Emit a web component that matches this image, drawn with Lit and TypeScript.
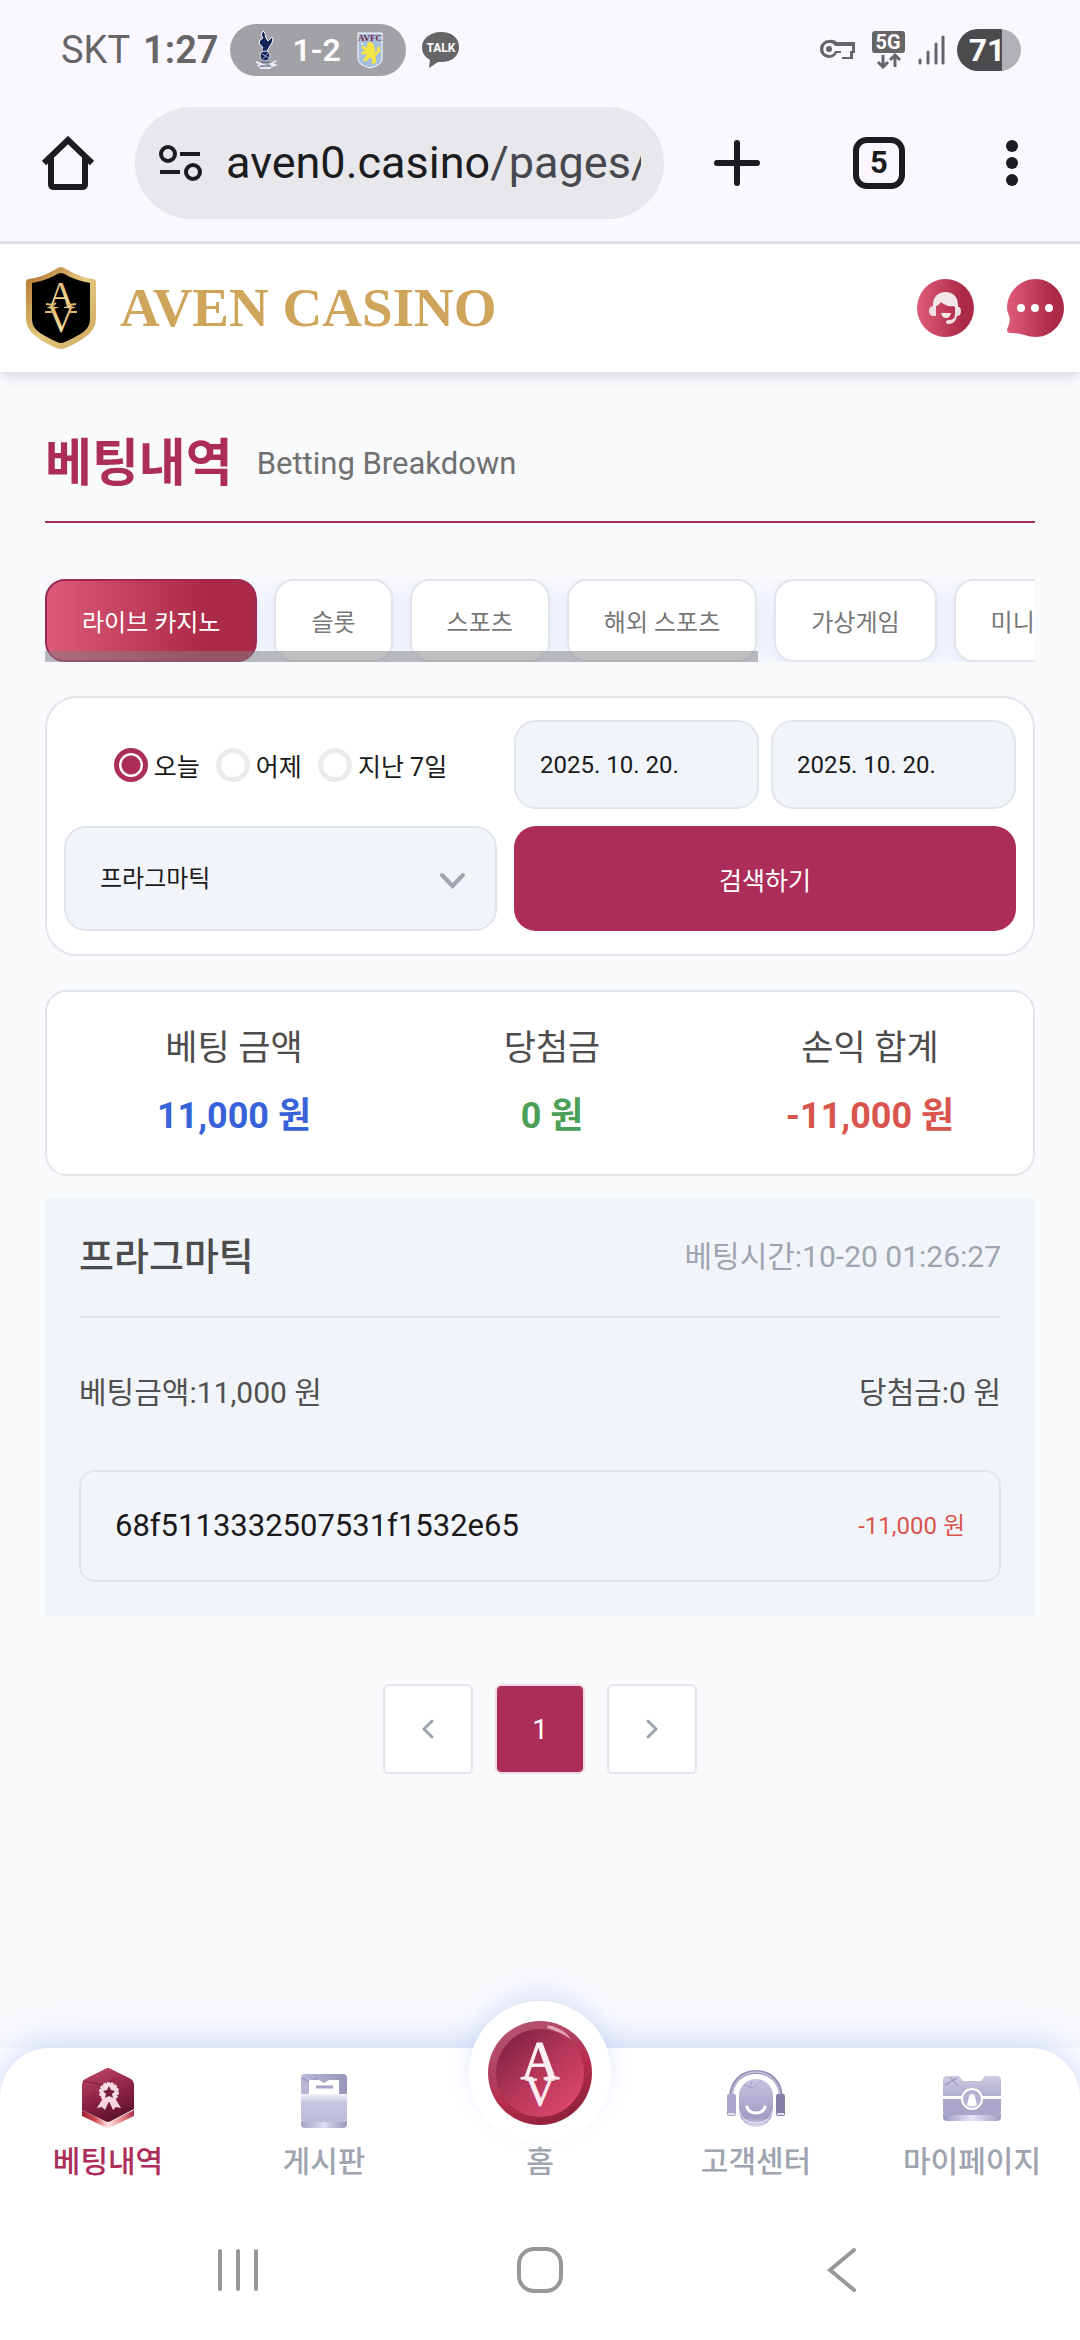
import { LitElement, html, css, svg, nothing } from "lit";
import { customElement, state } from "lit/decorators.js";
import { classMap } from "lit/directives/class-map.js";

const base = css`
  :host {
    display: block;
    font-family: Roboto, "Noto Sans CJK KR", sans-serif;
  }
  *,
  *::before,
  *::after {
    box-sizing: border-box;
  }
  button,
  input,
  select {
    font-family: inherit;
    margin: 0;
    padding: 0;
    border: 0;
    background: none;
    color: inherit;
  }
  a {
    color: inherit;
    text-decoration: none;
  }
  svg {
    display: block;
    flex: none;
  }
`;

@customElement("status-bar")
class StatusBar extends LitElement {
  static styles = [
    base,
    css`
      .bar {
        display: flex;
        align-items: center;
        height: 100px;
        padding: 0 59px 0 61px;
        color: #666568;
        font-size: 38px;
        line-height: 44px;
      }
      .time {
        margin-left: 13px;
        font-weight: 600;
      }
      .score {
        display: flex;
        align-items: center;
        gap: 16px;
        height: 52px;
        margin-left: 11px;
        padding: 0 23px 0 25px;
        border-radius: 26px;
        background: #a2a1a6;
        color: #fff;
        font-size: 32px;
        font-weight: 600;
      }
      .talk {
        margin-left: 16px;
      }
      .right {
        display: flex;
        align-items: center;
        margin-left: auto;
      }
      .net {
        margin-left: 16px;
      }
      .signal {
        margin-left: 12px;
      }
      .battery {
        display: flex;
        align-items: center;
        justify-content: center;
        width: 64px;
        height: 42px;
        margin-left: 11px;
        padding-right: 4px;
        border-radius: 21px;
        background: linear-gradient(90deg, #4b4a4d 71%, #b3b1b8 71%);
        color: #fff;
        font-size: 32px;
        font-weight: 700;
      }
    `,
  ];

  render() {
    return html`
      <div class="bar">
        <span>SKT</span>
        <span class="time">1:27</span>
        <div class="score">
          <svg width="22" height="38" viewBox="0 0 22 38">
            <path d="M8 0l2 2 1 5 2 3 4-4 1 2-1 4-2 3-3 5-3 0-1-3-4-5 1-3 3-2-2-3z" fill="#14255a" stroke="#fff" />
            <path d="M9 17v4M11 17v4" stroke="#14255a" stroke-width="2" />
            <circle cx="10" cy="25" r="5" fill="#14255a" stroke="#e5e7f0" />
            <path d="M7 23l7 4M8 28l5-6" stroke="#9aa3bf" stroke-width="1" />
            <path d="M1 31l5 2-3 2 6-1 5 2 6-2-4-1 5-3M5 37h11" stroke="#e9ebf2" stroke-width="2" fill="none" />
            <path d="M6 31h8M5 35h11" stroke="#46547f" stroke-width="1" />
          </svg>
          <span>1-2</span>
          <svg width="26" height="37" viewBox="0 0 26 37">
            <path d="M1 1h24v26q0 6-12 9Q1 33 1 27z" fill="#a5bfdd" stroke="#fff" />
            <text x="13" y="9" text-anchor="middle" font-size="9" font-weight="700" font-family="Liberation Serif, serif" fill="#7a1f46">AVFC</text>
            <path
              d="M12 10l4 2 1 4 1 5 3-2-1-3 2-1 1 4-4 4-1 3 1 4-4 2 1-4-3-3-4 4-3-1 3-3 1-4-5 1 0-2 4-1-4-3 1-2 5 3-1-4z"
              fill="#f5e445"
              stroke="#f5e445"
            />
            <circle cx="5" cy="12" r="1" fill="#fff" />
          </svg>
        </div>
        <svg class="talk" width="38" height="36" viewBox="0 0 38 36">
          <path d="M19 0C8 0 0 7 0 15c0 6 3 10 8 13L7 36l9-6h3c11 0 18-6 18-15S30 0 19 0z" fill="#666568" />
          <text x="19" y="20" text-anchor="middle" font-size="12" font-weight="700" font-family="Roboto, sans-serif" fill="#fff">TALK</text>
        </svg>
        <div class="right">
          <svg width="38" height="24" viewBox="0 0 38 24">
            <path
              d="M11 3a9 9 0 1 0 8 13h3v0h2v6h11v-6h2V5H19a9 9 0 0 0-8-2z"
              transform="translate(0 -1)"
              fill="#666568"
            />
            <path d="M11 5a6 6 0 1 0 6 8h6v6h2v0h7v-6h2V8H17a6 6 0 0 0-6-3z" fill="#faf7fe" />
            <path d="M17 8h17v5h-2v5h-5v-5H17z" fill="#faf7fe" />
            <circle cx="11" cy="11" r="3" fill="#666568" />
          </svg>
          <svg class="net" width="34" height="38" viewBox="0 0 34 38">
            <rect x="0" y="0" width="33" height="22" rx="3" fill="#666568" />
            <text x="16" y="18" text-anchor="middle" font-size="20" font-weight="700" font-family="Roboto, sans-serif" fill="#fff">5G</text>
            <path d="M11 24v12M6 31l5 5 5-5M23 36V24M18 29l5-5 5 5" fill="none" stroke="#666568" stroke-width="3" />
          </svg>
          <svg class="signal" width="28" height="30" viewBox="0 0 28 30">
            <path d="M2 25v3M10 17v11M18 9v19M25 2v26" stroke="#666568" stroke-width="3" stroke-linecap="round" />
          </svg>
          <div class="battery">71</div>
        </div>
      </div>
    `;
  }
}

@customElement("browser-toolbar")
class BrowserToolbar extends LitElement {
  static styles = [
    base,
    css`
      .bar {
        display: flex;
        align-items: center;
        padding: 7px 62px 22px 42px;
        border-bottom: 3px solid #e0e0e7;
        color: #1b1c20;
      }
      .omnibox {
        display: flex;
        flex: 1;
        align-items: center;
        min-width: 0;
        height: 112px;
        margin: 0 50px 0 41px;
        padding: 0 23px 0 24px;
        border-radius: 56px;
        background: #e7e7ec;
      }
      .url {
        flex: 1;
        min-width: 0;
        margin-left: 24px;
        overflow: hidden;
        font-size: 45px;
        line-height: 60px;
        text-align: left;
        white-space: nowrap;
      }
      .path {
        color: #46484e;
      }
      .tabs {
        width: 52px;
        height: 52px;
        margin: 0 101px 0 93px;
        border: 6px solid #1b1c20;
        border-radius: 14px;
        font-size: 31px;
        font-weight: 700;
        line-height: 40px;
        text-align: center;
      }
    `,
  ];

  render() {
    return html`
      <div class="bar">
        <button aria-label="Home">
          <svg width="52" height="54" viewBox="0 0 52 54">
            <path d="M2 27L26 4l24 23M9 21v27q0 3 3 3h28q3 0 3-3V21" fill="none" stroke="#1b1c20" stroke-width="6" />
          </svg>
        </button>
        <div class="omnibox">
          <button aria-label="Site information">
            <svg width="43" height="38" viewBox="0 0 43 38" fill="none" stroke="#1b1c20" stroke-width="4">
              <circle cx="9" cy="10" r="7" />
              <circle cx="34" cy="28" r="7" />
              <path d="M21 10h20M1 28h20" />
            </svg>
          </button>
          <button class="url">aven0.casino<span class="path">/pages/</span></button>
        </div>
        <button aria-label="New tab">
          <svg width="46" height="46" viewBox="0 0 46 46">
            <path d="M23 3v40M3 23h40" stroke="#1b1c20" stroke-width="6" stroke-linecap="round" />
          </svg>
        </button>
        <button class="tabs" aria-label="Open tabs">5</button>
        <button aria-label="More options">
          <svg width="12" height="48" viewBox="0 0 12 48" fill="#1b1c20">
            <circle cx="6" cy="7" r="6" />
            <circle cx="6" cy="24" r="6" />
            <circle cx="6" cy="41" r="6" />
          </svg>
        </button>
      </div>
    `;
  }
}

@customElement("site-header")
class SiteHeader extends LitElement {
  static styles = [
    base,
    css`
      :host {
        position: relative;
        z-index: 1;
      }
      .bar {
        display: flex;
        align-items: center;
        height: 130px;
        padding: 0 16px 0 26px;
        border-bottom: 2px solid #e2e6ec;
        background: #fff;
        box-shadow: 0 6px 10px -2px rgba(40, 50, 60, 0.14);
      }
      .brand {
        display: flex;
        align-items: center;
        gap: 24px;
        color: #cfa45b;
        font-family: "Liberation Serif", serif;
        font-size: 55px;
        font-weight: 700;
        line-height: 64px;
      }
      .actions {
        display: flex;
        gap: 33px;
        margin-left: auto;
      }
    `,
  ];

  render() {
    return html`
      <header class="bar">
        <a class="brand" href="#home">
          <svg width="70" height="82" viewBox="0 0 70 82">
            <defs>
              <linearGradient id="gold" x1="0" y1="0" x2="1" y2="1">
                <stop offset="0" stop-color="#b06d27" />
                <stop offset=".5" stop-color="#e3c981" />
                <stop offset="1" stop-color="#cfa55c" />
              </linearGradient>
              <linearGradient id="ink" x1="0" y1="0" x2="0" y2="1">
                <stop offset="0" stop-color="#e0b468" />
                <stop offset="1" stop-color="#fbe9b4" />
              </linearGradient>
            </defs>
            <path d="M35 0q2 0 5 2 13 8 27 10 3 0 3 4v35c0 12-8 18-20 25q-11 6-15 6t-15-6C8 69 0 63 0 51V16q0-4 3-4Q17 10 30 2q3-2 5-2z" fill="url(#gold)" />
            <path d="M35 6q3 0 7 3 10 5 22 7v36c0 8-5 13-15 18q-11 6-14 6t-14-6C11 65 6 60 6 52V16q12-2 22-7 4-3 7-3z" fill="#000" />
            <g font-family="Liberation Serif, serif" font-size="38" font-weight="400" fill="url(#ink)" text-anchor="middle">
              <text x="35" y="41">A</text>
              <text x="35" y="65">V</text>
            </g>
            <path d="M20 37l7 1 3-2M19 45h9M50 37l-7 1-3-2M51 45h-9" stroke="#e0b468" stroke-width="2" fill="none" />
          </svg>
          <span>AVEN CASINO</span>
        </a>
        <div class="actions">
          <button aria-label="고객센터">
            <svg width="57" height="58" viewBox="0 0 57 58">
              <defs>
                <linearGradient id="red" x1="0" x2="1">
                  <stop offset=".05" stop-color="#dc5877" />
                  <stop offset=".8" stop-color="#ab2a48" />
                </linearGradient>
              </defs>
              <ellipse cx="28.500" cy="29" rx="28.500" ry="29" fill="url(#red)" />
              <path d="M16 29v-3c0-8 5-13 12.500-13S41 18 41 26v4l-3-1-1-2q-8 1-13-4-3 4-5 4v2z" fill="#f2e6e8" />
              <path d="M19 27v10h-2q-5 0-5-5t5-5zM38 27q6 0 6 5t-4 5q-1 7-8 8-3 0-3-2t3-2q6 0 6-6z" fill="#efdfe2" />
              <path d="M24 34h10q-1 5-5 5t-5-5z" fill="#f2e6e8" />
            </svg>
          </button>
          <button aria-label="메시지">
            <svg width="57" height="58" viewBox="0 0 57 58">
              <defs>
                <linearGradient id="red2" x1="0" x2="1">
                  <stop offset=".05" stop-color="#dc5877" />
                  <stop offset=".8" stop-color="#ab2a48" />
                </linearGradient>
              </defs>
              <path d="M28.500 0C44 0 57 13 57 29S44 58 28.500 58q-5 0-11-2-5-2-13-2-6 0-4-5 3-6 2-11Q0 33 0 29C0 13 13 0 28.500 0z" fill="url(#red2)" />
              <g fill="#fff">
                <circle cx="14" cy="29" r="4" />
                <circle cx="28" cy="29" r="4" />
                <circle cx="42" cy="29" r="4" />
              </g>
            </svg>
          </button>
        </div>
      </header>
    `;
  }
}

@customElement("betting-page")
class BettingPage extends LitElement {
  @state() private tab = 0;
  @state() private range = 0;

  private tabs = ["라이브 카지노", "슬롯", "스포츠", "해외 스포츠", "가상게임", "미니게임"];
  private ranges = ["오늘", "어제", "지난 7일"];
  private totals = [
    { label: "베팅 금액", value: "11,000 원", tone: "blue" },
    { label: "당첨금", value: "0 원", tone: "green" },
    { label: "손익 합계", value: "-11,000 원", tone: "red" },
  ];

  static styles = [
    base,
    css`
      .page {
        padding: 60px 45px 80px;
      }
      .title {
        display: flex;
        align-items: center;
        gap: 24px;
        padding-bottom: 27px;
        border-bottom: 2px solid #a1305a;
        color: #707070;
        font-size: 31px;
        line-height: 60px;
      }
      h1 {
        margin: 0;
        color: #ad2d5a;
        font-size: 51px;
        font-weight: 700;
        line-height: 60px;
      }
      .tabs-wrap {
        position: relative;
        margin-top: 56px;
      }
      .tabs {
        display: flex;
        gap: 17px;
        overflow: hidden;
      }
      .tab {
        flex: none;
        height: 83px;
        padding: 0 35px;
        border: 2px solid #e2e6ec;
        border-radius: 20px;
        background: #fff;
        box-shadow: 0 6px 20px rgba(160, 180, 250, 0.28);
        color: #777;
        font-size: 24px;
        white-space: nowrap;
      }
      .tab.active {
        border-color: #9c2a55;
        background: linear-gradient(90deg, #dd5a79, #ab2a48 75%);
        color: #fff;
      }
      .thumb {
        position: absolute;
        bottom: 0;
        left: 0;
        width: 72%;
        height: 11px;
        background: rgba(128, 128, 128, 0.5);
      }
      .search {
        display: grid;
        grid-template-columns: minmax(0, 433fr) minmax(0, 502fr);
        grid-template-rows: 89px 105px;
        gap: 17px;
        margin-top: 34px;
        padding: 22px 17px 23px;
        border: 2px solid #e2e6ec;
        border-radius: 32px;
        background: #fff;
        color: #1a1a1a;
        font-size: 25px;
      }
      .ranges {
        display: flex;
        align-items: center;
        justify-content: center;
        gap: 16px;
        white-space: nowrap;
      }
      .range {
        display: flex;
        align-items: center;
        gap: 6px;
      }
      .range input {
        appearance: none;
        flex: none;
        width: 34px;
        height: 34px;
        border: 5px solid #ebebeb;
        border-radius: 50%;
      }
      .range input:checked {
        border-color: #ad2d5a;
        background: radial-gradient(circle, #ad2d5a 9px, #fff 10px) padding-box;
      }
      .dates {
        display: flex;
        gap: 12px;
      }
      .date,
      .select {
        flex: 1;
        width: 0;
        min-width: 0;
        border: 2px solid #e2e6ec;
        border-radius: 22px;
        background: #f1f5fa;
      }
      .date {
        padding: 0 24px;
        font-size: 24px;
      }
      .select-wrap {
        position: relative;
        display: flex;
      }
      .select {
        appearance: none;
        padding: 0 80px 0 34px;
        font-size: 24px;
      }
      .chevron {
        position: absolute;
        top: 46px;
        right: 31px;
        pointer-events: none;
      }
      .submit {
        border-radius: 22px;
        background: #ad2d5a;
        color: #fff;
        font-size: 25px;
      }
      .totals {
        display: grid;
        grid-template-columns: repeat(3, 1fr);
        margin: 34px 0 0;
        padding: 32px 4px 33px 28px;
        border: 2px solid #e2e6ec;
        border-radius: 22px;
        background: #fff;
        color: #4c4c4c;
        font-size: 36px;
        line-height: 50px;
        text-align: center;
      }
      .totals dt {
        margin-bottom: 17px;
        font-size: 35px;
      }
      .totals dd {
        margin: 0;
        font-weight: 700;
      }
      .blue {
        color: #3862da;
      }
      .green {
        color: #4aa056;
      }
      .red {
        color: #d9544d;
      }
      .bet {
        margin-top: 22px;
        padding: 34px;
        background: #f1f5fa;
        color: #505050;
        font-size: 30px;
        line-height: 50px;
      }
      .row {
        display: flex;
        align-items: center;
        justify-content: space-between;
      }
      .head {
        padding-bottom: 34px;
        border-bottom: 2px solid #e2e6ec;
        color: #9ea4b0;
      }
      h2 {
        margin: 0;
        color: #4c4c4c;
        font-size: 38px;
        font-weight: 500;
        line-height: 50px;
      }
      .amounts {
        margin-top: 50px;
      }
      .ticket {
        height: 112px;
        margin-top: 52px;
        padding: 0 34px;
        border: 2px solid #e2e6ec;
        border-radius: 16px;
        color: #1a1a1a;
        font-size: 31px;
      }
      .ticket .red {
        font-size: 24px;
      }
      .pages {
        display: flex;
        justify-content: center;
        gap: 22px;
        margin-top: 68px;
      }
      .pages button {
        display: grid;
        place-items: center;
        width: 90px;
        height: 90px;
        border: 2px solid #e2e6ec;
        border-radius: 6px;
        background: #fff;
        font-size: 28px;
      }
      .pages .current {
        border-color: #f3d9e5;
        background: #ad2d5a;
        background-clip: padding-box;
        color: #fff;
      }
    `,
  ];

  render() {
    return html`
      <main class="page">
        <div class="title">
          <h1>베팅내역</h1>
          <span>Betting Breakdown</span>
        </div>
        <div class="tabs-wrap">
          <nav class="tabs">
            ${this.tabs.map(
              (name, i) => html`<button
                class=${classMap({ tab: true, active: i === this.tab })}
                @click=${() => (this.tab = i)}
              >
                ${name}
              </button>`
            )}
          </nav>
          <div class="thumb"></div>
        </div>
        <form class="search" @submit=${(e: Event) => e.preventDefault()}>
          <div class="ranges">
            ${this.ranges.map(
              (name, i) => html`<label class="range">
                <input type="radio" name="range" .checked=${i === this.range} @change=${() => (this.range = i)} />
                ${name}
              </label>`
            )}
          </div>
          <div class="dates">
            <input class="date" type="text" aria-label="시작일" value="2025. 10. 20." />
            <input class="date" type="text" aria-label="종료일" value="2025. 10. 20." />
          </div>
          <div class="select-wrap">
            <select class="select" aria-label="게임사">
              <option>프라그마틱</option>
            </select>
            <svg class="chevron" width="27" height="18" viewBox="0 0 27 18">
              <path d="M3 3l10.500 11L24 3" fill="none" stroke="#9ea4b0" stroke-width="4" stroke-linecap="round" />
            </svg>
          </div>
          <button class="submit">검색하기</button>
        </form>
        <dl class="totals">
          ${this.totals.map(
            (t) => html`<div>
              <dt>${t.label}</dt>
              <dd class=${t.tone}>${t.value}</dd>
            </div>`
          )}
        </dl>
        <article class="bet">
          <div class="row head">
            <h2>프라그마틱</h2>
            <span>베팅시간:10-20 01:26:27</span>
          </div>
          <div class="row amounts">
            <span>베팅금액:11,000 원</span>
            <span>당첨금:0 원</span>
          </div>
          <div class="row ticket">
            <span>68f5113332507531f1532e65</span>
            <span class="red">-11,000 원</span>
          </div>
        </article>
        <nav class="pages">
          <button aria-label="이전">
            <svg width="12" height="20" viewBox="0 0 12 20">
              <path d="M10 2L2 10l8 8" fill="none" stroke="#9ea4b0" stroke-width="3" stroke-linecap="round" />
            </svg>
          </button>
          <button class="current">1</button>
          <button aria-label="다음">
            <svg width="12" height="20" viewBox="0 0 12 20">
              <path d="M2 2l8 8-8 8" fill="none" stroke="#9ea4b0" stroke-width="3" stroke-linecap="round" />
            </svg>
          </button>
        </nav>
      </main>
    `;
  }
}

const navIcons = {
  bets: svg`
    <defs>
      <linearGradient id="hex" x1=".2" y1="0" x2=".6" y2="1">
        <stop offset="0" stop-color="#bf4566" />
        <stop offset=".5" stop-color="#8f2547" />
        <stop offset="1" stop-color="#5c0f2a" />
      </linearGradient>
      <linearGradient id="edge">
        <stop offset="0" stop-color="#a32237" />
        <stop offset=".25" stop-color="#cf4b50" />
        <stop offset=".5" stop-color="#fde6e6" />
        <stop offset=".75" stop-color="#e78f93" />
        <stop offset="1" stop-color="#b03043" />
      </linearGradient>
    </defs>
    <path d="M4 42l26 13 26-13v6L33 59q-3 2-6 0L4 48z" fill="url(#edge)" />
    <path d="M27 1q3-2 6 0l20 10q3 2 3 5v25L33 53q-3 2-6 0L4 42V16q0-3 3-5z" fill="url(#hex)" />
    <path d="M5 13l20 4 12-6M17 14l9 9" fill="none" stroke="#7c1f3e" stroke-width="1" />
    <path d="M25 30l-6 10 5-1 3 3 5-11zM37 30l6 10-5-1-3 3-5-11z" fill="#f6d3dd" />
    <circle cx="31" cy="24" r="9" fill="#f8dbe3" stroke="#f8dbe3" stroke-width="2" stroke-dasharray="3 1" />
    <path d="M31 18l2 4 4 1-3 3 1 4-4-2-4 2 1-4-3-3 4-1z" fill="#7a1d3c" />`,
  board: svg`
    <defs>
      <linearGradient id="lilac" x1="0" y1="0" x2="0" y2="1">
        <stop offset="0" stop-color="#f3f3fb" />
        <stop offset=".3" stop-color="#c6c6e2" />
        <stop offset="1" stop-color="#bcbcda" />
      </linearGradient>
      <linearGradient id="lilac-edge">
        <stop offset="0" stop-color="#a3a2c4" />
        <stop offset=".5" stop-color="#dcdcf2" />
        <stop offset="1" stop-color="#9a97bb" />
      </linearGradient>
      <linearGradient id="lilac-back">
        <stop offset="0" stop-color="#b9b8d6" />
        <stop offset="1" stop-color="#9896b8" />
      </linearGradient>
    </defs>
    <path d="M7 10q0-4 4-4h38q4 0 4 4v16H7z" fill="url(#lilac-back)" />
    <path d="M8 10l8 4 8-5" stroke="#8b88ae" stroke-width="1" fill="none" />
    <path d="M15 12h10l5 3 5-3h10v15H15z" fill="#fff" />
    <path d="M22 19h17" stroke="#a5a4c4" stroke-width="3" />
    <path d="M7 26h46v24q0 4-4 4H11q-4 0-4-4z" fill="url(#lilac)" />
    <path d="M7 51q0 3 4 3h38q4 0 4-3v5q0 4-4 4H11q-4 0-4-4z" fill="url(#lilac-edge)" />`,
  help: svg`
    <defs>
      <linearGradient id="face" x1="0" y1="0" x2="0" y2="1">
        <stop offset="0" stop-color="#c8c5e0" />
        <stop offset=".8" stop-color="#9f9bc3" />
        <stop offset="1" stop-color="#e0dff2" />
      </linearGradient>
    </defs>
    <path d="M5 28C6 13 16 4 30 4s24 9 25 24" fill="none" stroke="#9995ba" stroke-width="4" />
    <path d="M6 27C7 14 17 4 30 4s23 10 24 23" fill="none" stroke="#d6d4e6" stroke-width="1" />
    <rect x="13" y="11" width="34" height="48" rx="17" fill="url(#face)" />
    <path d="M13 42q3 13 17 13t17-13" fill="none" stroke="#eeedfa" stroke-width="1" />
    <path d="M18 17l9 3 8-7M26 13l-3 9" fill="none" stroke="#a5a2c4" stroke-width="1" />
    <path d="M21 39q2 6 9 6t9-6" fill="none" stroke="#fff" stroke-width="3" stroke-linecap="round" />
    <rect x="1" y="26" width="9" height="22" rx="2" fill="#a8a5c8" />
    <rect x="50" y="26" width="9" height="22" rx="2" fill="#847fa5" />
    <path d="M2 46h7M51 46h7" stroke="#e3e1ef" stroke-width="2" />`,
  my: svg`
    <defs>
      <linearGradient id="case" x1="0" y1="0" x2="0" y2="1">
        <stop offset="0" stop-color="#cdcbe3" />
        <stop offset="1" stop-color="#b1aed0" />
      </linearGradient>
      <linearGradient id="case-edge">
        <stop offset="0" stop-color="#9c99bd" />
        <stop offset=".5" stop-color="#e6e5fa" />
        <stop offset="1" stop-color="#a19ec0" />
      </linearGradient>
    </defs>
    <path d="M1 12q0-4 4-4h12l4 5h18l4-5h12q4 0 4 4v16H1z" fill="url(#case)" />
    <path d="M3 17l12-7M8 9l8 9" fill="none" stroke="#8f8bb0" stroke-width="1" />
    <path d="M1 31h58v12q0 4-4 4H5q-4 0-4-4z" fill="#a9a6c9" />
    <path d="M1 44q0 3 4 3h50q4 0 4-3v5q0 4-4 4H5q-4 0-4-4z" fill="url(#case-edge)" />
    <circle cx="30" cy="31" r="11" fill="#fff" />
    <circle cx="30" cy="31" r="9" fill="#b4b1d2" />
    <path d="M27 29a3 3 0 1 1 6 0l2 8q-5 3-10 0z" fill="#fff" />`,
};

@customElement("bottom-nav")
class BottomNav extends LitElement {
  private items = [
    { label: "베팅내역", icon: navIcons.bets, active: true },
    { label: "게시판", icon: navIcons.board },
    { label: "홈", home: true },
    { label: "고객센터", icon: navIcons.help },
    { label: "마이페이지", icon: navIcons.my },
  ] as { label: string; icon?: unknown; active?: boolean; home?: boolean }[];

  static styles = [
    base,
    css`
      :host {
        background: #fff;
      }
      .nav {
        display: grid;
        grid-template-columns: repeat(5, 1fr);
        height: 152px;
        padding-top: 20px;
        border-radius: 50px 50px 0 0;
        background: #fff;
        box-shadow: 0 -2px 36px rgba(120, 150, 240, 0.42);
        clip-path: inset(-120px 0 0 0);
      }
      .item {
        position: relative;
        display: flex;
        flex-direction: column;
        align-items: center;
        gap: 14px;
        color: #9ea4b0;
        font-size: 30px;
        font-weight: 500;
        line-height: 40px;
      }
      .active {
        color: #ad2d5a;
      }
      .bump {
        display: grid;
        place-items: center;
        width: 142px;
        height: 142px;
        margin: -67px 0 -15px;
        border-radius: 50%;
        background: #fff;
        box-shadow: 0 -10px 22px rgba(120, 150, 240, 0.2);
      }
    `,
  ];

  private coin() {
    return html`<span class="bump">
      <svg width="104" height="106" viewBox="0 0 104 106">
        <defs>
          <linearGradient id="rim" x1=".2" y1="0" x2=".7" y2="1">
            <stop offset="0" stop-color="#b45674" />
            <stop offset=".45" stop-color="#b23a5a" />
            <stop offset=".6" stop-color="#b82c4b" />
            <stop offset="1" stop-color="#8a203c" />
          </linearGradient>
          <linearGradient id="disc" x1=".1" y1=".1" x2=".8" y2=".9">
            <stop offset="0" stop-color="#7f2344" />
            <stop offset=".5" stop-color="#b33659" />
            <stop offset="1" stop-color="#d9456f" />
          </linearGradient>
        </defs>
        <circle cx="52" cy="54" r="52" fill="url(#rim)" />
        <circle cx="52" cy="54" r="44" fill="url(#disc)" />
        <path d="M60 6q15 3 23 14-12-8-24-11z" fill="#e3a5b6" />
        <g font-family="Liberation Serif, serif" fill="#fdeef3" stroke="#fdeef3" text-anchor="middle">
          <text x="52" y="60" font-size="54">A</text>
          <text x="52" y="86" font-size="40">V</text>
        </g>
      </svg>
    </span>`;
  }

  render() {
    return html`
      <nav class="nav">
        ${this.items.map(
          (it) => html`<a
            class=${classMap({ item: true, active: !!it.active })}
            href="#"
            aria-current=${it.active ? "page" : nothing}
          >
            ${it.home ? this.coin() : html`<svg width="60" height="60" viewBox="0 0 60 60">${it.icon}</svg>`}
            <span>${it.label}</span>
          </a>`
        )}
      </nav>
    `;
  }
}

@customElement("system-nav")
class SystemNav extends LitElement {
  static styles = [
    base,
    css`
      .bar {
        display: grid;
        grid-template-columns: repeat(3, 1fr);
        align-items: center;
        justify-items: center;
        height: 140px;
        padding: 0 8%;
        background: #fff;
      }
    `,
  ];

  render() {
    return html`
      <div class="bar">
        <button aria-label="Recent apps">
          <svg width="42" height="46" viewBox="0 0 42 46">
            <path d="M3 4v38M21 4v38M39 4v38" stroke="#979797" stroke-width="4" stroke-linecap="round" />
          </svg>
        </button>
        <button aria-label="System home">
          <svg width="46" height="46" viewBox="0 0 46 46">
            <rect x="2" y="2" width="42" height="42" rx="15" fill="none" stroke="#979797" stroke-width="4" />
          </svg>
        </button>
        <button aria-label="Back">
          <svg width="30" height="46" viewBox="0 0 30 46">
            <path d="M27 3L3 23l24 20" fill="none" stroke="#979797" stroke-width="4" stroke-linecap="round" />
          </svg>
        </button>
      </div>
    `;
  }
}

@customElement("app-root")
class AppRoot extends LitElement {
  static styles = css`
    :host {
      display: flex;
      flex-direction: column;
      min-height: 100vh;
      background: #fff;
    }
    .chrome {
      background: #faf7fe;
    }
    .content {
      flex: 1;
      background: #f9fafc;
    }
  `;

  render() {
    return html`
      <div class="chrome">
        <status-bar></status-bar>
        <browser-toolbar></browser-toolbar>
      </div>
      <site-header></site-header>
      <betting-page class="content"></betting-page>
      <bottom-nav></bottom-nav>
      <system-nav></system-nav>
    `;
  }
}
